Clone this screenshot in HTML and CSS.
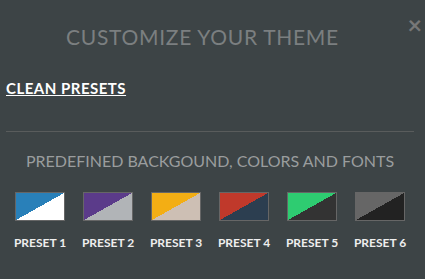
FILE: index.html
```html
<!DOCTYPE html>
<html lang="en">
<head>
	<meta charset="UTF-8">
	<meta name="viewport" content="width=device-width, initial-scale=1.0">
	<title>Customize your theme</title>
	<link rel="stylesheet" href="styles.css">
</head>
<body>

	<div class="panel">

		<span class="close">&times;</span>

		<h2 class="title">CUSTOMIZE YOUR THEME</h2>

		<a class="clean" href="#">CLEAN PRESETS</a>

		<hr class="divider">

		<h3 class="subtitle">PREDEFINED BACKGOUND, COLORS AND FONTS</h3>

		<div class="presets">
			<div class="preset">
				<div class="swatch p1"></div>
				<span>PRESET 1</span>
			</div>
			<div class="preset">
				<div class="swatch p2"></div>
				<span>PRESET 2</span>
			</div>
			<div class="preset">
				<div class="swatch p3"></div>
				<span>PRESET 3</span>
			</div>
			<div class="preset">
				<div class="swatch p4"></div>
				<span>PRESET 4</span>
			</div>
			<div class="preset">
				<div class="swatch p5"></div>
				<span>PRESET 5</span>
			</div>
			<div class="preset">
				<div class="swatch p6"></div>
				<span>PRESET 6</span>
			</div>
		</div>

	</div>

</body>
</html>
```

FILE: styles.css
```css
* {
	margin: 0;
	padding: 0;
	box-sizing: border-box;
}

body {
	background-color: #3d4446;
	font-family: Lato, "Open Sans", sans-serif;
}

.panel {
	position: relative;
	height: 279px;
	padding: 0 11px 0 6px;
}

.close {
	position: absolute;
	top: 12px;
	right: 3px;
	font-size: 25px;
	font-weight: 700;
	color: #777;
	line-height: 1;
}

.title {
	padding: 24px 15px 0 0;
	text-align: center;
	font-size: 21px;
	font-weight: 400;
	letter-spacing: 0.7px;
	color: #7b7f80;
	line-height: 25px;
}

.clean {
	display: inline-block;
	margin-top: 30px;
	font-size: 15px;
	font-weight: 700;
	letter-spacing: 0.5px;
	color: #fff;
	line-height: 18px;
	text-decoration: underline;
}

.divider {
	margin-top: 34px;
	border: none;
	border-top: 1px solid #595c5c;
}

.subtitle {
	margin-top: 19px;
	text-align: center;
	font-size: 16px;
	font-weight: 400;
	color: #9a9d9e;
	line-height: 19px;
}

.presets {
	display: flex;
	justify-content: center;
	gap: 17px;
	margin-top: 22px;
}

.preset {
	width: 51px;
	display: flex;
	flex-direction: column;
	align-items: center;
}

.preset .swatch {
	width: 50px;
	height: 29px;
	border: 1px solid #666;
}

.preset span {
	margin-top: 15px;
	font-size: 12px;
	font-weight: 700;
	color: #eee;
	white-space: nowrap;
	line-height: 14px;
}

.p1 { background: linear-gradient(to bottom right, #2980b9 50%, #fff 50%); }
.p2 { background: linear-gradient(to bottom right, #5b3b8a 50%, #b1b4b7 50%); }
.p3 { background: linear-gradient(to bottom right, #f3ae14 50%, #cdbfb4 50%); }
.p4 { background: linear-gradient(to bottom right, #c0392b 50%, #2c3e50 50%); }
.p5 { background: linear-gradient(to bottom right, #2ecc71 50%, #333 50%); }
.p6 { background: linear-gradient(to bottom right, #666 50%, #222 50%); }
```
